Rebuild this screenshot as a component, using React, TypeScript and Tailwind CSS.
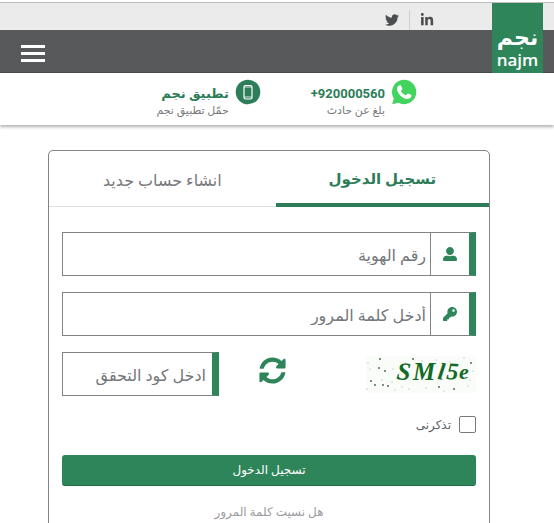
import { useState } from 'react';
import type { ReactNode } from 'react';
import { FaKey, FaLinkedinIn, FaSyncAlt, FaTwitter, FaUserAlt } from 'react-icons/fa';

const fontStack = "font-['Roboto','DejaVu_Sans',sans-serif]";

function Logo() {
  return (
    <a
      href="#home"
      className="absolute top-[3px] right-[11px] flex h-[70px] w-[51px] flex-col items-center justify-end bg-[#2f855a] pb-1 text-white"
    >
      <span className="text-[22px] leading-[26px] font-bold">نجم</span>
      <span className="font-['Open_Sans',sans-serif] text-[17px] leading-[18px] font-semibold">najm</span>
    </a>
  );
}

function WhatsappIcon() {
  return (
    <svg viewBox="0 0 26 26" className="h-[26px] w-[26px]" aria-hidden="true">
      <path d="M13 .8A12.2 12.2 0 1 1 7.4 23.8L1.2 25.2l1.6-5.8A12.2 12.2 0 0 1 13 .8z" fill="#43d35f" />
      <path
        d="M9.2 6.3c.5 0 .8.1 1 .6l1.1 2.6c.2.4 0 .8-.2 1.1l-.9 1.1c-.2.2-.2.4 0 .7 1.1 1.8 2.5 3 4.4 3.8.3.1.5.1.7-.1l1.2-1.4c.3-.3.6-.3.9-.2l2.5 1.2c.4.2.6.3.6.6 0 2-1.3 3.5-3.7 3.7-2.2.1-5.2-1.3-7.5-3.6-1.9-2-3.4-4.4-3.3-6.4.1-1.8 1.2-3.7 3.2-3.7z"
        fill="#fff"
      />
    </svg>
  );
}

function PhoneIcon() {
  return (
    <svg viewBox="0 0 26 26" className="h-[26px] w-[26px]" aria-hidden="true">
      <circle cx="13" cy="13" r="12.3" fill="#2c7d58" />
      <rect x="9" y="6.5" width="8" height="13.5" rx="1.5" fill="none" stroke="#fff" strokeWidth="1.2" />
      <path d="M9 8h8M9 18h8" stroke="#fff" strokeWidth="0.8" />
    </svg>
  );
}

interface ContactProps {
  icon: ReactNode;
  title: string;
  subtitle: string;
  href: string;
}

function Contact({ icon, title, subtitle, href }: ContactProps) {
  return (
    <a href={href} className="flex items-start gap-1.5">
      {icon}
      <span className="flex flex-col pt-1.5">
        <bdi className="text-[13px] leading-[18px] font-bold text-[#2c7d58]">{title}</bdi>
        <span className="text-[11px] leading-4 text-[#77797c]">{subtitle}</span>
      </span>
    </a>
  );
}

interface FieldProps {
  id: string;
  placeholder: string;
  type?: string;
  icon?: ReactNode;
}

function Field({ id, placeholder, type = 'text', icon }: FieldProps) {
  return (
    <div className="flex h-11 w-full border border-r-[7px] border-[#818386] border-r-[#2f855a]">
      {icon && (
        <label
          htmlFor={id}
          className="flex w-[39px] shrink-0 items-center justify-center border-l border-[#818386] text-[#2f855a]"
        >
          {icon}
        </label>
      )}
      <input
        id={id}
        type={type}
        placeholder={placeholder}
        aria-label={placeholder}
        className={`min-w-0 flex-1 bg-white pt-1 text-base text-[#55585c] outline-none placeholder:text-[#74777b] ${
          icon ? 'px-1' : 'px-1.5'
        }`}
      />
    </div>
  );
}

const specks = [
  [14, 3, 1], [2, 7, 0], [47, 3, 1], [84, 6, 0], [98, 2, 0], [105, 7, 1], [4, 13, 0], [13, 12, 1],
  [19, 15, 1], [27, 13, 0], [33, 18, 0], [5, 25, 1], [9, 29, 1], [16, 24, 0], [17, 29, 1], [1, 33, 0],
  [22, 30, 1], [26, 26, 0], [29, 34, 0], [36, 31, 0], [43, 33, 0], [60, 32, 0], [73, 31, 1], [78, 35, 0],
  [88, 33, 1], [102, 30, 0], [104, 24, 0], [90, 8, 0], [39, 7, 0], [56, 5, 0], [70, 4, 0], [107, 15, 0],
];

const captcha = [
  { char: 'S', x: 30, y: 23, size: 25, tilt: 6 },
  { char: 'M', x: 47, y: 24, size: 25, tilt: 0 },
  { char: 'l', x: 71, y: 23, size: 24, tilt: 8 },
  { char: '5', x: 80, y: 23, size: 24, tilt: 4 },
  { char: 'e', x: 93, y: 23, size: 22, tilt: 0 },
];

function Captcha() {
  return (
    <svg
      viewBox="0 0 110 37"
      className="h-[37px] w-[110px] overflow-visible"
      direction="ltr"
      role="img"
      aria-label="SMl5e"
    >
      <rect width="110" height="37" fill="#fafcfa" />
      {specks.map(([x, y, dark], i) => (
        <circle key={i} cx={x} cy={y} r={dark ? 0.9 : 0.6} fill={dark ? '#405c43' : '#8bb78e'} />
      ))}
      {captcha.map(({ char, x, y, size, tilt }) => (
        <text
          key={char}
          x={x}
          y={y}
          fontSize={size}
          transform={`rotate(${tilt} ${x} ${y})`}
          fill="#126b25"
          className="font-['Liberation_Serif',serif] font-bold italic"
        >
          {char}
        </text>
      ))}
    </svg>
  );
}

export default function App() {
  const [tab, setTab] = useState('login');

  const tabClass = (name: string) =>
    tab === name
      ? 'border-b-4 border-[#2c7d58] text-[15px] font-bold text-[#2c7d58]'
      : 'border-b border-[#dfe0e2] text-base text-[#77797c]';

  return (
    <div dir="rtl" className={`min-h-screen bg-white ${fontStack}`}>
      <header className="relative pt-0.5 shadow-[0_2px_3px_rgba(0,0,0,0.3)]">
        <div className="flex h-7 items-end border-t border-[#bdbdbd] bg-[#ebebeb] pr-[120px] text-[#4d4e50]">
          <a href="#linkedin" aria-label="LinkedIn" className="flex h-5 items-center border-l border-[#cfcfcf] pl-2.5">
            <FaLinkedinIn className="h-3.5 w-3.5" />
          </a>
          <a href="#twitter" aria-label="Twitter" className="flex h-5 items-center pr-2.5">
            <FaTwitter className="h-3.5 w-3.5" />
          </a>
        </div>
        <div className="flex h-[43px] items-center justify-end border-b border-[#48494b] bg-[#58595b] pl-[21px]">
          <button type="button" aria-label="القائمة" className="flex w-6 flex-col gap-1 pt-1">
            <span className="h-[3px] bg-white" />
            <span className="h-[3px] bg-white" />
            <span className="h-[3px] bg-white" />
          </button>
        </div>
        <Logo />
        <div className="flex h-[52px] gap-[50px] pt-1.5 pr-[137px]">
          <Contact href="#call" icon={<WhatsappIcon />} title="+920000560" subtitle="بلغ عن حادث" />
          <Contact href="#app" icon={<PhoneIcon />} title="تطبيق نجم" subtitle="حمّل تطبيق نجم" />
        </div>
      </header>

      <main className="pt-[25px] pr-16 pb-8 pl-12">
        <section className="rounded-[5px] border border-[#818386]">
          <div role="tablist" className="flex h-14">
            <button
              type="button"
              role="tab"
              aria-selected={tab === 'login'}
              onClick={() => setTab('login')}
              className={`w-[48.5%] pt-1 ${tabClass('login')}`}
            >
              تسجيل الدخول
            </button>
            <button
              type="button"
              role="tab"
              aria-selected={tab === 'register'}
              onClick={() => setTab('register')}
              className={`flex-1 pt-1 ${tabClass('register')}`}
            >
              انشاء حساب جديد
            </button>
          </div>

          <form className="flex flex-col gap-4 px-[13px] pt-[25px] pb-6" onSubmit={(e) => e.preventDefault()}>
            <Field id="national-id" placeholder="رقم الهوية" icon={<FaUserAlt className="h-3.5 w-3.5" />} />
            <Field
              id="password"
              type="password"
              placeholder="أدخل كلمة المرور"
              icon={<FaKey className="h-3.5 w-3.5" />}
            />
            <div className="flex items-center justify-between">
              <Captcha />
              <button type="button" aria-label="تحديث" className="mr-10 mb-2 text-[#2f855a]">
                <FaSyncAlt className="h-[27px] w-[27px]" />
              </button>
              <div className="w-[157px]">
                <Field id="captcha" placeholder="ادخل كود التحقق" />
              </div>
            </div>

            <label className="mt-1 flex items-center gap-2 self-start text-xs text-[#5d6064]">
              <input
                type="checkbox"
                className="h-[17px] w-[17px] appearance-none rounded-xs border border-[#77797c] checked:bg-[#2f855a]"
              />
              تذكرنى
            </label>

            <button
              type="submit"
              className="mt-1.5 h-[31px] rounded-[3px] border-b border-[#256b48] bg-[#2f855a] text-xs text-white"
            >
              تسجيل الدخول
            </button>

            <a href="#forgot" className="self-center text-xs leading-5 text-[#9a9ca0]">
              هل نسيت كلمة المرور
            </a>
          </form>
        </section>
      </main>
    </div>
  );
}
